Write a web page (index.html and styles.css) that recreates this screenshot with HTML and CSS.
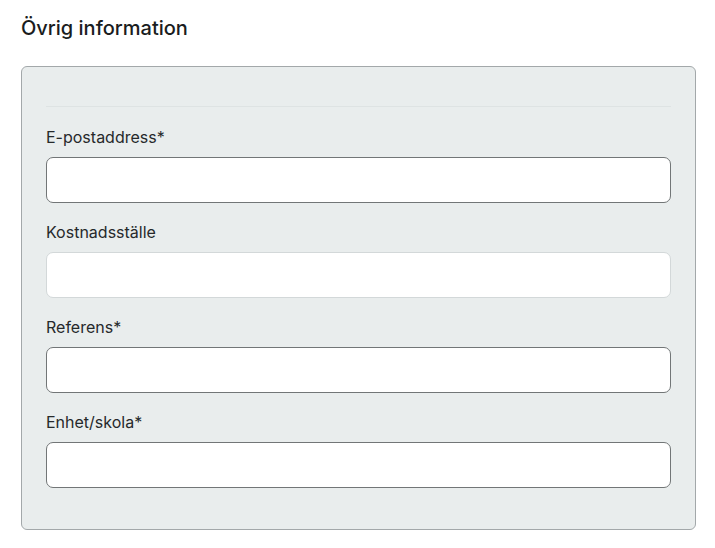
FILE: index.html
```html
<!DOCTYPE html>
<html lang="sv">
<head>
    <meta charset="UTF-8">
    <meta name="viewport" content="width=device-width, initial-scale=1.0">
    <title>Övrig information</title>
    <link rel="stylesheet" href="styles.css">
</head>
<body>

<h2 class="section-title">Övrig information</h2>

<div class="panel">
    <div class="divider"></div>

    <div class="field">
        <label for="email">E-postaddress*</label>
        <input type="text" id="email">
    </div>

    <div class="field">
        <label for="cost">Kostnadsställe</label>
        <input type="text" id="cost" class="muted">
    </div>

    <div class="field">
        <label for="ref">Referens*</label>
        <input type="text" id="ref">
    </div>

    <div class="field">
        <label for="unit">Enhet/skola*</label>
        <input type="text" id="unit">
    </div>
</div>

</body>
</html>
```

FILE: styles.css
```css
body {
    font-family: Inter, 'Noto Sans', sans-serif;
    background-color: #ffffff;
    color: #1f2324;
    margin: 0;
    padding: 0 19px 0 21px;
}

.section-title {
    font-size: 20px;
    font-weight: 500;
    line-height: 28px;
    margin: 14px 0 24px;
    color: #1a1d1e;
}

.panel {
    background-color: #e9eded;
    border: 1px solid #a3a8aa;
    border-radius: 6px;
    padding: 39px 24px 22px;
}

.divider {
    height: 1px;
    background-color: #dee3e3;
    margin-bottom: 20px;
}

.field {
    display: flex;
    flex-direction: column;
    margin-bottom: 19px;
}

.field label {
    font-size: 16px;
    line-height: 20px;
    margin-bottom: 10px;
    color: #26292b;
}

.field input {
    height: 46px;
    box-sizing: border-box;
    border: 1px solid #727677;
    border-radius: 7px;
    background-color: #ffffff;
    font-family: inherit;
    font-size: 15px;
    padding: 0 12px;
    margin: 0;
}

.field input.muted {
    border-color: #d3d8d9;
}
```
